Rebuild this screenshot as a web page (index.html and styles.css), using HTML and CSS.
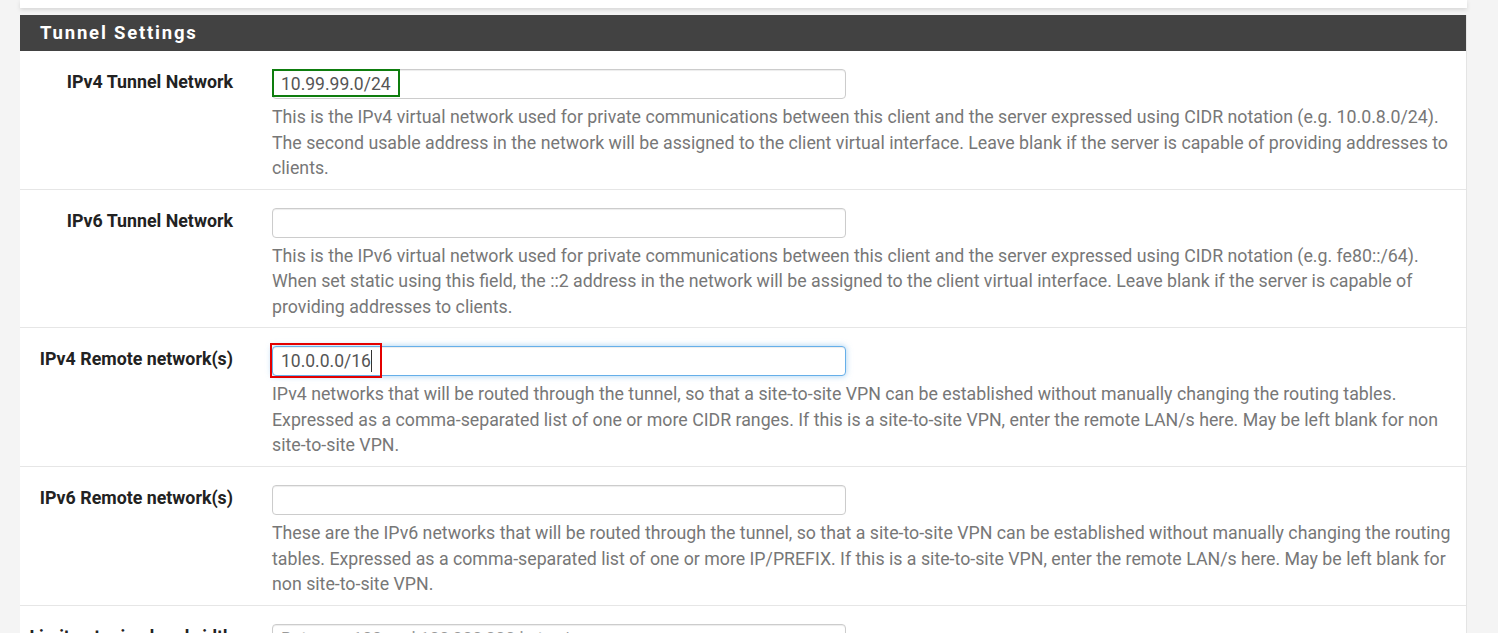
FILE: index.html
```html
<!DOCTYPE html>
<html lang="en">
<head>
    <meta charset="UTF-8">
    <title>Tunnel Settings</title>
    <link rel="stylesheet" href="styles.css">
</head>
<body>
    <div class="wrap">
        <div class="panel-prev"></div>

        <div class="panel">
            <div class="panel-heading">Tunnel Settings</div>

            <div class="form-row">
                <label class="form-label">IPv4 Tunnel Network</label>
                <div class="form-field">
                    <div class="input-box">
                        <input class="form-input" type="text" value="10.99.99.0/24">
                        <span class="mark mark-green"></span>
                    </div>
                    <p class="help">This is the IPv4 virtual network used for private communications between this client and the server expressed using CIDR notation (e.g. 10.0.8.0/24). The second usable address in the network will be assigned to the client virtual interface. Leave blank if the server is capable of providing addresses to clients.</p>
                </div>
            </div>

            <div class="form-row">
                <label class="form-label">IPv6 Tunnel Network</label>
                <div class="form-field">
                    <div class="input-box">
                        <input class="form-input" type="text" value="">
                    </div>
                    <p class="help">This is the IPv6 virtual network used for private communications between this client and the server expressed using CIDR notation (e.g. fe80::/64). When set static using this field, the ::2 address in the network will be assigned to the client virtual interface. Leave blank if the server is capable of providing addresses to clients.</p>
                </div>
            </div>

            <div class="form-row">
                <label class="form-label">IPv4 Remote network(s)</label>
                <div class="form-field">
                    <div class="input-box">
                        <input class="form-input focus" type="text" value="10.0.0.0/16">
                        <span class="caret"></span>
                        <span class="mark mark-red"></span>
                    </div>
                    <p class="help">IPv4 networks that will be routed through the tunnel, so that a site-to-site VPN can be established without manually changing the routing tables. Expressed as a comma-separated list of one or more CIDR ranges. If this is a site-to-site VPN, enter the remote LAN/s here. May be left blank for non site-to-site VPN.</p>
                </div>
            </div>

            <div class="form-row">
                <label class="form-label">IPv6 Remote network(s)</label>
                <div class="form-field">
                    <div class="input-box">
                        <input class="form-input" type="text" value="">
                    </div>
                    <p class="help">These are the IPv6 networks that will be routed through the tunnel, so that a site-to-site VPN can be established without manually changing the routing tables. Expressed as a comma-separated list of one or more IP/PREFIX. If this is a site-to-site VPN, enter the remote LAN/s here. May be left blank for non site-to-site VPN.</p>
                </div>
            </div>

            <div class="form-row">
                <label class="form-label">Limit outgoing bandwidth</label>
                <div class="form-field">
                    <div class="input-box">
                        <input class="form-input" type="number" placeholder="Between 100 and 100,000,000 bytes/sec">
                    </div>
                </div>
            </div>
        </div>
    </div>
</body>
</html>
```

FILE: styles.css
```css
* {
    margin: 0;
    padding: 0;
    box-sizing: border-box;
}
body {
    background: #f4f4f4;
    font-family: Roboto, "Liberation Sans", sans-serif;
    color: #333;
    overflow: hidden;
}
.wrap {
    padding: 0 31px 0 20px;
}
.panel-prev {
    height: 8px;
    background: #fff;
    box-shadow: 0 2px 4px rgba(0, 0, 0, 0.12);
    margin-bottom: 7px;
}
.panel {
    background: #fff;
    border-right: 1px solid #e4e4e4;
}
.panel-heading {
    background: #424242;
    color: #fff;
    height: 36px;
    line-height: 36px;
    padding-left: 20px;
    font-size: 18.5px;
    font-weight: bold;
    letter-spacing: 1.8px;
}

.form-row {
    display: grid;
    grid-template-columns: 213px 574px;
    column-gap: 39px;
    padding: 18px 0 7.2px;
    border-bottom: 1px solid #e6e6e6;
}
.form-label {
    text-align: right;
    font-size: 17.8px;
    font-weight: bold;
    color: #222;
    white-space: nowrap;
    padding-top: 2px;
}
.form-field {
    width: 574px;
}
.help {
    width: 1190px;
    margin-top: 6px;
    font-size: 17.75px;
    line-height: 25.5px;
    color: #777;
}

.input-box {
    position: relative;
    height: 30px;
}
.form-input {
    display: block;
    width: 574px;
    height: 30px;
    padding: 0 8px;
    border: 1px solid #ccc;
    border-radius: 4px;
    box-shadow: inset 0 1px 1px rgba(0, 0, 0, 0.075);
    font-family: Roboto, "Liberation Sans", sans-serif;
    font-size: 17.5px;
    color: #555;
    background: #fff;
    outline: none;
}
.form-input::placeholder {
    color: #999;
}
.form-input.focus {
    border-color: #66afe9;
    box-shadow: inset 0 1px 1px rgba(0, 0, 0, 0.075), 0 0 6px rgba(102, 175, 233, 0.6);
}

/* annotation boxes drawn over the inputs */
.mark {
    position: absolute;
    border: 2px solid;
    pointer-events: none;
}
.mark-green {
    border-color: #0e7d0e;
    left: 0;
    top: 0;
    width: 128px;
    height: 28px;
}
.mark-red {
    border-color: #e30000;
    left: -2px;
    top: -3px;
    width: 112px;
    height: 35px;
}
.caret {
    position: absolute;
    left: 99px;
    top: 4px;
    width: 1px;
    height: 22px;
    background: #333;
}
```
